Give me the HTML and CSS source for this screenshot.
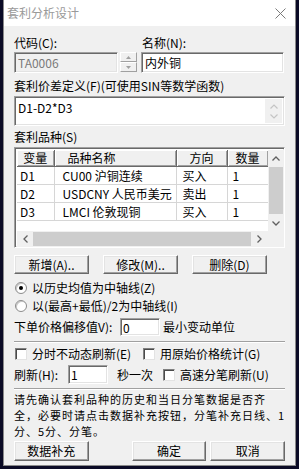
FILE: index.html
```html
<!DOCTYPE html>
<html lang="zh-CN">
<head>
    <meta charset="UTF-8">
    <title>套利分析设计</title>
    <link rel="stylesheet" href="styles.css">
</head>
<body>
<div class="win">
    <div class="titlebar">
        <span class="title">套利分析设计</span>
        <svg class="close" width="11" height="11" viewBox="0 0 11 11">
            <path d="M0.5 0.5 L10.5 10.5 M10.5 0.5 L0.5 10.5" stroke="#7a7a7a" stroke-width="1" fill="none"/>
        </svg>
    </div>

    <div class="content">
        <div class="row labels">
            <label class="lbl-code">代码(C):</label>
            <label>名称(N):</label>
        </div>
        <div class="row inputs">
            <input class="edit code" type="text" value="TA0006" disabled>
            <div class="spin">
                <div class="spin-btn"><svg width="5" height="3" viewBox="0 0 5 3"><path d="M0 3 L2.5 0 L5 3 Z" fill="#a0a0a0"/></svg></div>
                <div class="spin-btn"><svg width="5" height="3" viewBox="0 0 5 3"><path d="M0 0 L2.5 3 L5 0 Z" fill="#a0a0a0"/></svg></div>
            </div>
            <input class="edit name" type="text" value="内外铜">
        </div>

        <div class="row label-line gap7">套利价差定义(F)(可使用SIN等数学函数)</div>
        <div class="memo sunken">
            <div class="memo-text">D1-D2*D3</div>
            <div class="vbar light">
                <svg width="8" height="5" viewBox="0 0 8 5"><polyline points="0.5,4.5 4,1 7.5,4.5" stroke="#c4c4c4" stroke-width="1.2" fill="none"/></svg>
                <svg width="8" height="5" viewBox="0 0 8 5"><polyline points="0.5,0.5 4,4 7.5,0.5" stroke="#c4c4c4" stroke-width="1.2" fill="none"/></svg>
            </div>
        </div>

        <div class="row label-line gap5">套利品种(S)</div>
        <div class="list sunken">
            <div class="list-main">
                <table class="grid">
                    <colgroup>
                        <col style="width:37px">
                        <col style="width:122px">
                        <col style="width:51px">
                        <col style="width:41px">
                    </colgroup>
                    <thead>
                        <tr>
                            <th>变量</th>
                            <th class="th-name">品种名称</th>
                            <th>方向</th>
                            <th>数量</th>
                        </tr>
                    </thead>
                    <tbody>
                        <tr><td class="c-var">D1</td><td class="c-name">CU00 沪铜连续</td><td class="c-dir">买入</td><td class="c-qty">1</td></tr>
                        <tr><td class="c-var">D2</td><td class="c-name">USDCNY 人民币美元</td><td class="c-dir">卖出</td><td class="c-qty">1</td></tr>
                        <tr><td class="c-var">D3</td><td class="c-name">LMCI 伦敦现铜</td><td class="c-dir">买入</td><td class="c-qty">1</td></tr>
                    </tbody>
                </table>
            </div>
            <div class="vscroll">
                <div class="arrow"><svg width="8" height="5" viewBox="0 0 8 5"><polyline points="0.5,4.5 4,1 7.5,4.5" stroke="#606060" stroke-width="1.3" fill="none"/></svg></div>
                <div class="thumb"></div>
                <div class="arrow"><svg width="8" height="5" viewBox="0 0 8 5"><polyline points="0.5,0.5 4,4 7.5,0.5" stroke="#606060" stroke-width="1.3" fill="none"/></svg></div>
            </div>
            <div class="hscroll">
                <div class="arrow"><svg width="5" height="8" viewBox="0 0 5 8"><polyline points="4.5,0.5 1,4 4.5,7.5" stroke="#606060" stroke-width="1.3" fill="none"/></svg></div>
                <div class="thumb"></div>
                <div class="arrow"><svg width="5" height="8" viewBox="0 0 5 8"><polyline points="0.5,0.5 4,4 0.5,7.5" stroke="#606060" stroke-width="1.3" fill="none"/></svg></div>
            </div>
            <div class="corner"></div>
        </div>

        <div class="row btn-row">
            <button class="btn">新增(A)..</button>
            <button class="btn">修改(M)..</button>
            <button class="btn">删除(D)</button>
        </div>

        <div class="row opt first">
            <span class="radio checked"></span>
            <span class="opt-text">以历史均值为中轴线(Z)</span>
        </div>
        <div class="row opt">
            <span class="radio"></span>
            <span class="opt-text">以(最高+最低)/2为中轴线(I)</span>
        </div>

        <div class="row offset-row">
            <span class="lbl-offset">下单价格偏移值V):</span>
            <input class="edit small" type="text" value="0">
            <span class="unit">最小变动单位</span>
        </div>

        <div class="sep"></div>

        <div class="row opt check-row">
            <span class="check"></span>
            <span class="opt-text w-check">分时不动态刷新(E)</span>
            <span class="check"></span>
            <span class="opt-text">用原始价格统计(G)</span>
        </div>

        <div class="row refresh-row">
            <span class="lbl-refresh">刷新(H):</span>
            <input class="edit small" type="text" value="1">
            <span class="per-sec">秒一次</span>
            <span class="check"></span>
            <span class="opt-text">高速分笔刷新(U)</span>
        </div>

        <div class="sep sep2"></div>

        <div class="note">
            <div class="note-line">请先确认套利品种的历史和当日分笔数据是否齐</div>
            <div class="note-line">全，必要时请点击数据补充按钮，分笔补充日线、1</div>
            <div class="note-line">分、5分、分笔。</div>
        </div>

        <div class="row foot">
            <button class="btn">数据补充</button>
            <button class="btn ok">确定</button>
            <button class="btn cancel">取消</button>
        </div>
    </div>
</div>
</body>
</html>
```

FILE: styles.css
```css
* {
    box-sizing: border-box;
}

body {
    margin: 0;
    width: 299px;
    height: 469px;
    overflow: hidden;
    background-color: #0b0b26;
    font-family: "Noto Sans CJK SC", "Noto Sans", sans-serif;
    font-size: 12px;
    color: #000;
}

.win {
    margin-left: 3px;
    width: 293px;
    height: 466px;
    background: #f0f0f0;
    border: 1px solid #8a8a8a;
    border-top: none;
}

.titlebar {
    height: 26px;
    background: #fff;
    display: flex;
    align-items: center;
    justify-content: space-between;
    padding: 0 9px 0 3px;
}

.title {
    color: #9a9a9a;
    font-size: 12px;
    line-height: 26px;
}

.close {
    display: block;
    margin-top: 1px;
}

.content {
    padding: 11px 10px 0 10px;
}

.row {
    display: flex;
    align-items: center;
}

.labels {
    height: 12px;
    line-height: 12px;
}

.lbl-code {
    width: 128px;
}

.inputs {
    margin-top: 3px;
    height: 21px;
    align-items: stretch;
}

.edit {
    font-family: inherit;
    font-size: 12px;
    color: #000;
    background: #fff;
    border: 1px solid;
    border-color: #a0a0a0 #fff #fff #a0a0a0;
    box-shadow: inset 1px 1px 0 #696969, inset -1px -1px 0 #e3e3e3;
    padding: 0 3px;
    margin: 0;
    outline: none;
}

.edit.code {
    width: 104px;
    background: #f0f0f0;
    color: #7a7a7a;
}

.edit.name {
    width: 143px;
    margin-left: 4px;
}

.spin {
    width: 17px;
    margin-left: 2px;
    display: flex;
    flex-direction: column;
    justify-content: space-between;
    padding: 0 0 1px;
}

.spin-btn {
    height: 10px;
    display: flex;
    align-items: center;
    justify-content: center;
    background: #f0f0f0;
    border: 1px solid;
    border-color: #fff #a0a0a0 #a0a0a0 #fff;
}

.spin-btn svg {
    display: block;
}

.label-line {
    height: 12px;
    line-height: 12px;
}

.gap7 {
    margin-top: 7px;
}

.gap5 {
    margin-top: 5px;
}

.sunken {
    border: 1px solid;
    border-color: #a0a0a0 #fff #fff #a0a0a0;
    box-shadow: inset 1px 1px 0 #696969, inset -1px -1px 0 #e3e3e3;
    background: #fff;
}

.memo {
    margin-top: 4px;
    height: 30px;
    display: flex;
    padding: 2px;
}

.memo-text {
    flex: 1;
    padding: 3px 1px 0;
    line-height: 12px;
}

.vbar {
    width: 17px;
    background: #f0f0f0;
    display: flex;
    flex-direction: column;
    align-items: center;
    justify-content: space-between;
    padding: 5px 0 4px;
}

.vbar svg {
    display: block;
}

/* list view */
.list {
    margin-top: 4px;
    height: 101px;
    padding: 2px;
    display: grid;
    grid-template-columns: 251px 16px;
    grid-template-rows: 81px 16px;
}

.list-main {
    overflow: hidden;
    background: #fff;
}

.grid {
    border-collapse: collapse;
    table-layout: fixed;
    width: 251px;
}

.grid th {
    height: 16px;
    padding: 0;
    font-weight: normal;
    text-align: center;
    line-height: 14px;
    background: #f0f0f0;
    border-right: 1px solid #696969;
    border-bottom: 1px solid #696969;
    box-shadow: inset 1px 1px 0 #fff, inset -1px -1px 0 #a0a0a0;
}

.grid th.th-name {
    text-align: left;
    padding-left: 13px;
}

.grid td {
    height: 18px;
    padding: 0;
    line-height: 17px;
    white-space: nowrap;
    overflow: hidden;
    border-right: 1px solid #d6d6d6;
    border-bottom: 1px solid #d6d6d6;
}

.c-var {
    padding-left: 3px !important;
}

.c-name {
    padding-left: 8px !important;
}

.c-dir {
    padding-left: 6px !important;
}

.c-qty {
    padding-left: 5px !important;
}

.vscroll {
    background: #f0f0f0;
    display: flex;
    flex-direction: column;
}

.vscroll .arrow,
.hscroll .arrow {
    width: 16px;
    height: 16px;
    display: flex;
    align-items: center;
    justify-content: center;
    flex: none;
}

.vscroll .thumb {
    flex: 1;
    margin: 1px 1px;
    background: #cdcdcd;
}

.hscroll {
    background: #f0f0f0;
    display: flex;
}

.hscroll .arrow:last-child {
    width: 17px;
}

.hscroll .thumb {
    flex: 1;
    margin: 1px 0;
    background: #cdcdcd;
}

.corner {
    background: #f0f0f0;
}

/* buttons */
.btn {
    font-family: inherit;
    font-size: 12px;
    color: #000;
    height: 19px;
    width: 75px;
    padding: 0;
    margin: 0;
    background: #f0f0f0;
    border: 1px solid;
    border-color: #fff #696969 #696969 #fff;
    box-shadow: inset -1px -1px 0 #a0a0a0, inset 1px 1px 0 #e3e3e3;
    line-height: 16px;
}

.btn-row {
    margin-top: 7px;
    gap: 14px;
}

/* radio / check rows */
.opt {
    height: 12px;
    margin-top: 6px;
}

.opt.first {
    margin-top: 8px;
}

.radio {
    width: 12px;
    height: 12px;
    margin-left: 1px;
    border-radius: 50%;
    background: #fff;
    border: 1px solid #8c8c8c;
    box-shadow: inset 1px 1px 0 #c8c8c8;
    display: flex;
    align-items: center;
    justify-content: center;
    flex: none;
}

.radio.checked::after {
    content: "";
    width: 4px;
    height: 4px;
    border-radius: 50%;
    background: #000;
}

.opt-text {
    margin-left: 5px;
    line-height: 12px;
    white-space: nowrap;
}

.check {
    width: 12px;
    height: 12px;
    margin-left: 1px;
    background: #fff;
    border: 1px solid;
    border-color: #808080 #e3e3e3 #e3e3e3 #808080;
    box-shadow: inset 1px 1px 0 #4a4a4a;
    flex: none;
}

.w-check {
    width: 110px;
}

.offset-row {
    margin-top: 6px;
    height: 18px;
    align-items: stretch;
}

.offset-row span {
    line-height: 18px;
}

.lbl-offset {
    width: 106px;
}

.edit.small {
    width: 40px;
    padding: 0 2px;
}

.unit {
    margin-left: 3px;
}

.sep {
    margin-top: 5px;
    height: 2px;
    border-top: 1px solid #a0a0a0;
    border-bottom: 1px solid #fff;
}

.check-row {
    margin-top: 5px;
}

.refresh-row {
    margin-top: 5px;
    height: 19px;
    align-items: stretch;
}

.refresh-row > span {
    align-self: center;
}

.lbl-refresh {
    width: 54px;
    line-height: 19px;
}

.per-sec {
    margin-left: 9px;
    width: 45px;
}

.sep2 {
    margin-top: 4px;
}

.note {
    margin-top: 1px;
    font-size: 11px;
    letter-spacing: 1px;
    white-space: nowrap;
}

.note-line {
    height: 16px;
    line-height: 16px;
}

.foot {
    margin-top: 2px;
}

.foot .btn {
    height: 20px;
}

.foot .ok {
    margin-left: 43px;
}

.foot .cancel {
    margin-left: 4px;
}
```
